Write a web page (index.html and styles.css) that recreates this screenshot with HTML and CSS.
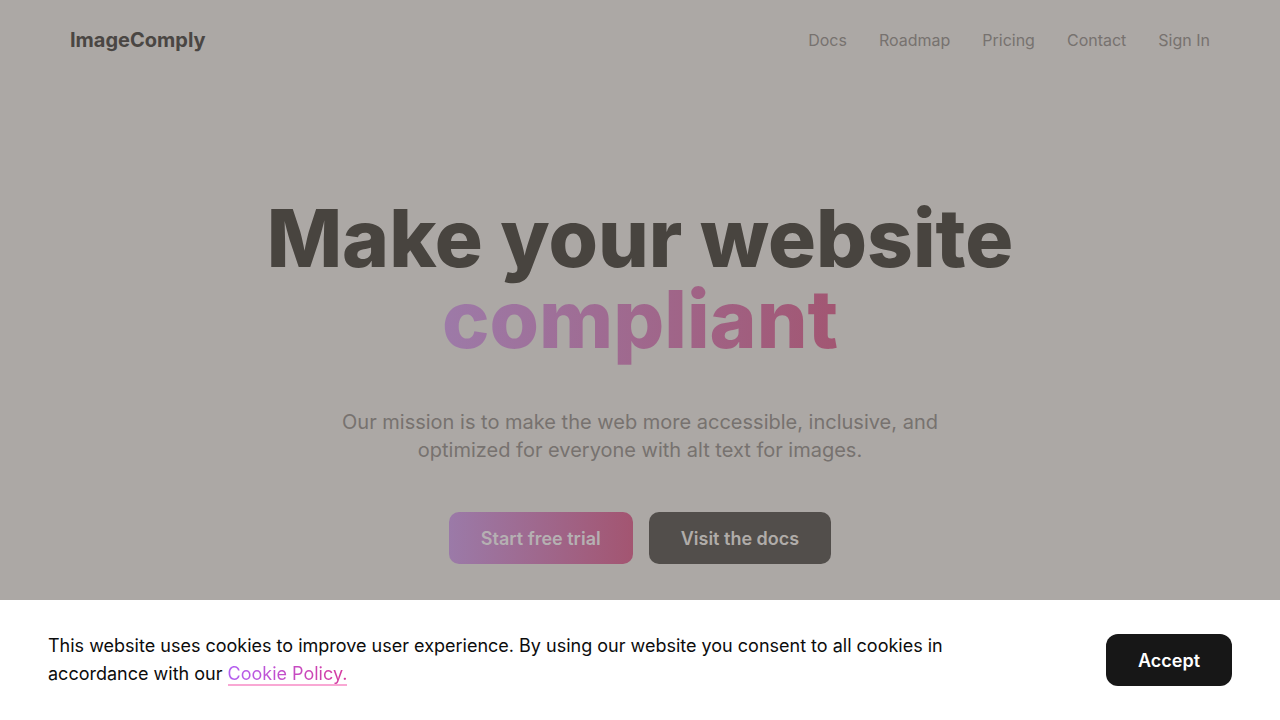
FILE: index.html
```html
<!DOCTYPE html>
<html lang="en">
<head>
<meta charset="utf-8">
<title>ImageComply</title>
<link rel="stylesheet" href="styles.css">
</head>
<body>
<header class="nav">
  <a class="logo" href="#">ImageComply</a>
  <nav class="links">
    <a href="#">Docs</a>
    <a href="#">Roadmap</a>
    <a href="#">Pricing</a>
    <a href="#">Contact</a>
    <a href="#">Sign In</a>
  </nav>
</header>
<main class="hero">
  <h1 class="title">Make your website<br><span class="grad">compliant</span></h1>
  <p class="lead">Our mission is to make the web more accessible, inclusive, and optimized for everyone with alt text for images.</p>
  <div class="actions">
    <a class="btn btn-trial" href="#">Start free trial</a>
    <a class="btn btn-docs" href="#">Visit the docs</a>
  </div>
</main>
<div class="cookie">
  <p class="cookie-text">This website uses cookies to improve user experience. By using our website you consent to all cookies in accordance with our <a class="cookie-link" href="#">Cookie Policy.</a></p>
  <button class="accept">Accept</button>
</div>
</body>
</html>
```

FILE: styles.css
```css
* { box-sizing: border-box; }
html, body { margin: 0; padding: 0; }
body {
  font-family: Inter, "Noto Sans", sans-serif;
  background: #aca8a5;
  height: 720px;
  overflow: hidden;
  display: flex;
  flex-direction: column;
}
a { text-decoration: none; }
.nav {
  height: 80px;
  padding: 0 70px;
  display: flex;
  align-items: center;
  justify-content: space-between;
}
.logo {
  font-size: 20px;
  font-weight: 700;
  color: #4a4643;
}
.links {
  display: flex;
  gap: 32px;
}
.links a {
  font-size: 16px;
  color: #77726f;
}
.hero {
  flex: 1;
  display: flex;
  flex-direction: column;
  align-items: center;
  padding-top: 117px;
  text-align: center;
}
.title {
  margin: 0;
  font-size: 80px;
  line-height: 81px;
  font-weight: 800;
  color: #48443f;
}
.grad {
  background: linear-gradient(90deg, #9d7aa8 0%, #a25672 100%);
  -webkit-background-clip: text;
  background-clip: text;
  color: transparent;
}
.lead {
  margin: 49px 0 0;
  max-width: 620px;
  font-size: 20px;
  line-height: 28px;
  color: #77726f;
}
.actions {
  margin-top: 48px;
  display: flex;
  gap: 16px;
}
.btn {
  height: 52px;
  padding: 0 32px;
  border-radius: 10px;
  display: flex;
  align-items: center;
  font-size: 18px;
  font-weight: 600;
}
.btn-trial {
  background: linear-gradient(90deg, #9b7aa8 0%, #a35571 100%);
  color: #b5b0b2;
}
.btn-docs {
  background: #524e4b;
  color: #b0aca9;
}
.cookie {
  height: 120px;
  background: #ffffff;
  padding: 32px 48px;
  display: flex;
  align-items: center;
  justify-content: space-between;
  gap: 48px;
}
.cookie-text {
  margin: 0;
  max-width: 920px;
  font-size: 18px;
  line-height: 28px;
  color: #0c0c0c;
}
.cookie-link {
  background: linear-gradient(90deg, #b25ff2 0%, #d63a9c 100%);
  -webkit-background-clip: text;
  background-clip: text;
  color: transparent;
  border-bottom: 2px solid #f9a8d4;
}
.accept {
  width: 126px;
  height: 52px;
  border: none;
  border-radius: 12px;
  background: #171717;
  color: #ffffff;
  font-family: Inter, sans-serif;
  font-size: 18px;
  font-weight: 600;
  flex-shrink: 0;
}
```
